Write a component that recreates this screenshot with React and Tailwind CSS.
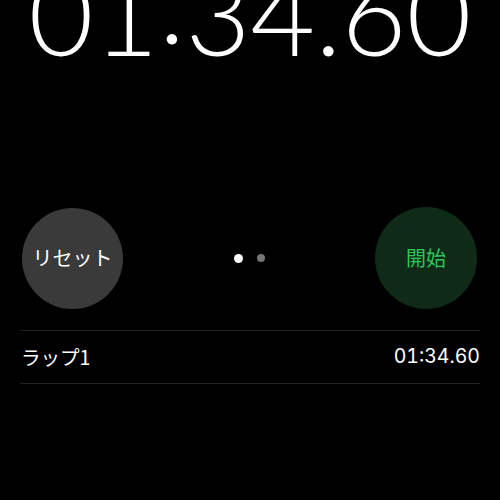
export default function App() {
  return (
    <div className="w-[500px] h-[500px] bg-black overflow-hidden relative" style={{ fontFamily: "Inter, 'Noto Sans CJK JP', sans-serif" }}>
      <div className="h-[200px] flex justify-center">
        <div className="mt-[-43px] text-white font-light text-[112px] leading-none tracking-[0px] tabular-nums whitespace-nowrap" style={{ fontFamily: "Lato, sans-serif" }}>
          01<span className="inline-block -translate-y-[12px]">:</span>34.60
        </div>
      </div>
      <div className="flex items-center justify-between px-[22px] mt-[7px]">
        <div className="w-[101px] h-[101px] rounded-full bg-[#3a3a3a] flex items-center justify-center text-white text-[20px]" style={{ fontFamily: "'Noto Sans CJK JP', sans-serif" }}>
          リセット
        </div>
        <div className="flex gap-[14px]">
          <div className="w-[9px] h-[9px] rounded-full bg-white" />
          <div className="w-[8px] h-[8px] rounded-full bg-[#777]" />
        </div>
        <div className="w-[102px] h-[102px] rounded-full bg-[#0f2b17] flex items-center justify-center text-[#30c55a] text-[20px] mr-[1px]" style={{ fontFamily: "'Noto Sans CJK JP', sans-serif" }}>
          開始
        </div>
      </div>
      <div className="mx-[20px] mt-[21px] border-t border-[#222]">
        <div className="h-[53px] flex items-center justify-between border-b border-[#222] text-white text-[19.5px]">
          <span className="ml-[1px]" style={{ fontFamily: "'Noto Sans CJK JP', sans-serif" }}>ラップ1</span>
          <span className="tabular-nums" style={{ fontFamily: "Inter, sans-serif" }}>01:34.60</span>
        </div>
      </div>
    </div>
  );
}
